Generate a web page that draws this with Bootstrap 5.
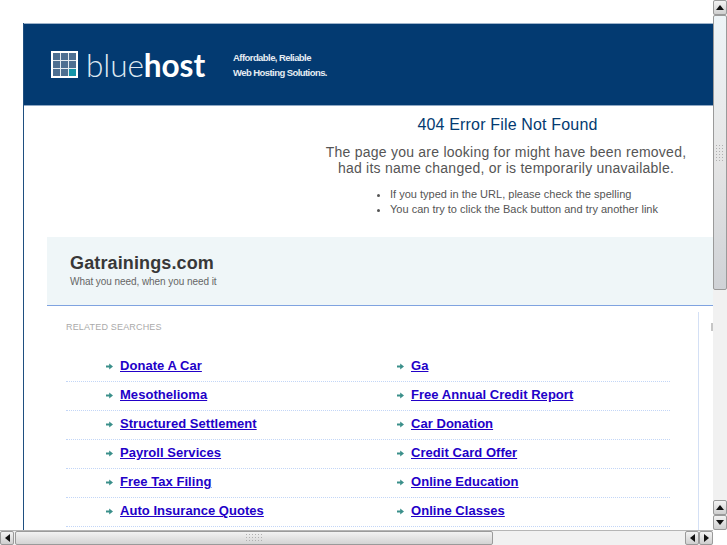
<!DOCTYPE html>
<html lang="en"><head><meta charset="utf-8"><title>404</title>
<link href="https://cdn.jsdelivr.net/npm/bootstrap@5.3.0/dist/css/bootstrap.min.css" rel="stylesheet">
<style>
html,body{height:545px;overflow:hidden;background:#fff;margin:0}
body{font-family:"Liberation Sans",Arial,sans-serif;color:#555}
.shell{width:727px;height:545px}
.viewport{height:530px;overflow:hidden}
.pagewrap{width:713px;padding:23px 0 0 23px}
.frame{border-left:1px solid #1f4f80;height:507px;overflow:hidden}
.brandbar{background:#033a71;height:83px;margin-left:-1px;padding:0 0 0 28px;border-top:1px solid #9fb4cb;border-bottom:1px solid #8fa8c4}
.logo-mark{width:27px;height:27px;margin-top:27px;flex:none}
.logo-word{font-family:Lato,sans-serif;font-size:31.6px;line-height:30px;color:#dfe9f1;font-weight:300;margin:26px 0 0 8px;letter-spacing:-.1px}
.logo-word b{font-weight:700;color:#fff}
.slogan{font-size:9.5px;line-height:14.5px;font-weight:700;color:#e6edf3;letter-spacing:-.57px;margin:27px 0 0 28px}
.errblock{padding:9px 13px 0 0;margin-left:288px;text-align:center;height:131px}
.errtitle{font-size:16px;line-height:20px;color:#033a71;font-weight:400;margin:0 0 9px;padding-left:3px;letter-spacing:.17px}
.errtext{font-size:14px;line-height:16px;color:#555;margin:0 0 11px;letter-spacing:.24px}
.errlist{font-size:11px;line-height:15px;color:#555;text-align:left;margin:0 0 0 67px;padding-left:11px;letter-spacing:.01px}
.sitehead{background:#eff6f8;height:69px;margin-left:23px;padding:16px 0 0 23px;border-bottom:1px solid #7fa3e0}
.sitename{font-size:18px;line-height:21px;font-weight:700;color:#383838;margin:0;letter-spacing:.13px}
.sitetag{font-size:10px;line-height:13px;color:#666;margin:1px 0 0;letter-spacing:-.06px}
.lower{margin-left:42px}
.results{width:604px;padding-top:15px;flex:none}
.restitle{font-size:9px;line-height:12px;color:#aaa;letter-spacing:.18px;text-transform:uppercase;margin:0 0 20px}
.linkrow{height:29px;border-bottom:1px dotted #c3d6f7}
.linkcell{font-size:13px;line-height:26px;padding-bottom:2px;font-weight:700;letter-spacing:.04px}
.linkcell a{color:#2200c8}
.cell-a{width:291px;padding-left:40px}
.cell-b{width:313px;padding-left:40px}
.arrow{width:7px;height:7px;margin:0 7px 0 0;flex:none}
.sidecol{margin:6px 0 0 28px;border-left:1px solid #d4e0f5;padding:11px 0 0 12px;width:15px;height:220px;overflow:hidden}
.stem{width:2px;height:8px;background:#c6c6c6}
.vbar{width:14px;height:530px;background:#f1f1f1;background-image:radial-gradient(#dcdcdc 35%,transparent 40%);background-size:2px 2px}
.hbar{height:15px;background:#f1f1f1;background-image:radial-gradient(#dcdcdc 35%,transparent 40%);background-size:2px 2px;border-top:1px solid #b5b5b5}
.sb-btn{background:linear-gradient(#f3f3f3,#cfcfcf);border:1px solid #9a9a9a;border-radius:2px;flex:none;display:flex;align-items:center;justify-content:center}
.v-btn{width:14px;height:15px}
.h-btn{width:14px;height:14px}
.thumb-v{height:275px;width:14px;background:linear-gradient(#eef4f7,#e6e6e6 50%,#cfd2d6);border:1px solid #9a9a9a;border-radius:2px;flex:none}
.thumb-h{width:478px;height:14px;background:linear-gradient(#f2f2f2,#d4d4d4);border:1px solid #9a9a9a;border-radius:2px;margin-left:1px;flex:none}
.grip{background-image:radial-gradient(#b0b0b0 40%,transparent 45%);background-size:3px 3px}
.grip-v{width:10px;height:17px;margin:128px auto 0}
.grip-h{width:18px;height:10px;margin:1px 0 0 229px}
.corner{width:14px;background:#fff;flex:none}
.spacer{flex:1}
</style></head><body>
<div class="shell d-flex flex-column">
 <div class="d-flex viewport">
  <div class="pagewrap"><div class="frame">
   <div class="brandbar d-flex">
    <svg class="logo-mark" viewBox="0 0 27 27"><rect width="27" height="27" fill="#fff"/><rect x="2" y="2" width="23" height="23" fill="#4d6f92"/><rect x="17.5" y="17.5" width="7.5" height="7.5" fill="#1494a8"/><path d="M9.5 2v23M17.5 2v23M2 9.5h23M2 17.5h23" stroke="#e4ebf1" stroke-width="1"/></svg>
    <div class="logo-word">blue<b>host</b></div>
    <div class="slogan">Affordable, Reliable<br>Web Hosting Solutions.</div>
   </div>
   <div class="errblock">
    <h1 class="errtitle">404 Error File Not Found</h1>
    <p class="errtext">The page you are looking for might have been removed,<br>had its name changed, or is temporarily unavailable.</p>
    <ul class="errlist"><li>If you typed in the URL, please check the spelling</li><li>You can try to click the Back button and try another link</li></ul>
   </div>
   <div class="sitehead"><h2 class="sitename">Gatrainings.com</h2><p class="sitetag">What you need, when you need it</p></div>
   <div class="lower d-flex">
    <div class="results">
     <div class="restitle">Related Searches</div>
     <div class="d-flex linkrow"><div class="cell-a linkcell d-flex align-items-center"><svg class="arrow" viewBox="0 0 7 7"><path d="M0 2.6h3.2V.4L7 3.5 3.2 6.6V4.4H0z" fill="#3a8f8a"/></svg><a href="#">Donate A Car</a></div><div class="cell-b linkcell d-flex align-items-center"><svg class="arrow" viewBox="0 0 7 7"><path d="M0 2.6h3.2V.4L7 3.5 3.2 6.6V4.4H0z" fill="#3a8f8a"/></svg><a href="#">Ga</a></div></div>
     <div class="d-flex linkrow"><div class="cell-a linkcell d-flex align-items-center"><svg class="arrow" viewBox="0 0 7 7"><path d="M0 2.6h3.2V.4L7 3.5 3.2 6.6V4.4H0z" fill="#3a8f8a"/></svg><a href="#">Mesothelioma</a></div><div class="cell-b linkcell d-flex align-items-center"><svg class="arrow" viewBox="0 0 7 7"><path d="M0 2.6h3.2V.4L7 3.5 3.2 6.6V4.4H0z" fill="#3a8f8a"/></svg><a href="#">Free Annual Credit Report</a></div></div>
     <div class="d-flex linkrow"><div class="cell-a linkcell d-flex align-items-center"><svg class="arrow" viewBox="0 0 7 7"><path d="M0 2.6h3.2V.4L7 3.5 3.2 6.6V4.4H0z" fill="#3a8f8a"/></svg><a href="#">Structured Settlement</a></div><div class="cell-b linkcell d-flex align-items-center"><svg class="arrow" viewBox="0 0 7 7"><path d="M0 2.6h3.2V.4L7 3.5 3.2 6.6V4.4H0z" fill="#3a8f8a"/></svg><a href="#">Car Donation</a></div></div>
     <div class="d-flex linkrow"><div class="cell-a linkcell d-flex align-items-center"><svg class="arrow" viewBox="0 0 7 7"><path d="M0 2.6h3.2V.4L7 3.5 3.2 6.6V4.4H0z" fill="#3a8f8a"/></svg><a href="#">Payroll Services</a></div><div class="cell-b linkcell d-flex align-items-center"><svg class="arrow" viewBox="0 0 7 7"><path d="M0 2.6h3.2V.4L7 3.5 3.2 6.6V4.4H0z" fill="#3a8f8a"/></svg><a href="#">Credit Card Offer</a></div></div>
     <div class="d-flex linkrow"><div class="cell-a linkcell d-flex align-items-center"><svg class="arrow" viewBox="0 0 7 7"><path d="M0 2.6h3.2V.4L7 3.5 3.2 6.6V4.4H0z" fill="#3a8f8a"/></svg><a href="#">Free Tax Filing</a></div><div class="cell-b linkcell d-flex align-items-center"><svg class="arrow" viewBox="0 0 7 7"><path d="M0 2.6h3.2V.4L7 3.5 3.2 6.6V4.4H0z" fill="#3a8f8a"/></svg><a href="#">Online Education</a></div></div>
     <div class="d-flex linkrow"><div class="cell-a linkcell d-flex align-items-center"><svg class="arrow" viewBox="0 0 7 7"><path d="M0 2.6h3.2V.4L7 3.5 3.2 6.6V4.4H0z" fill="#3a8f8a"/></svg><a href="#">Auto Insurance Quotes</a></div><div class="cell-b linkcell d-flex align-items-center"><svg class="arrow" viewBox="0 0 7 7"><path d="M0 2.6h3.2V.4L7 3.5 3.2 6.6V4.4H0z" fill="#3a8f8a"/></svg><a href="#">Online Classes</a></div></div>
    </div>
    <div class="sidecol"><div class="stem"></div></div>
   </div>
  </div></div>
  <div class="vbar d-flex flex-column">
   <div class="sb-btn v-btn"><svg width="8" height="5" viewBox="0 0 8 5"><path d="M4 0l4 5H0z" fill="#111"/></svg></div>
   <div class="thumb-v"><div class="grip grip-v"></div></div>
   <div class="spacer"></div>
   <div class="sb-btn v-btn"><svg width="8" height="5" viewBox="0 0 8 5"><path d="M4 0l4 5H0z" fill="#111"/></svg></div>
   <div class="sb-btn v-btn"><svg width="8" height="5" viewBox="0 0 8 5"><path d="M0 0h8L4 5z" fill="#111"/></svg></div>
  </div>
 </div>
 <div class="d-flex">
  <div class="hbar d-flex flex-grow-1">
   <div class="sb-btn h-btn"><svg width="5" height="8" viewBox="0 0 5 8"><path d="M5 0v8L0 4z" fill="#111"/></svg></div>
   <div class="thumb-h"><div class="grip grip-h"></div></div>
   <div class="spacer"></div>
   <div class="sb-btn h-btn"><svg width="5" height="8" viewBox="0 0 5 8"><path d="M5 0v8L0 4z" fill="#111"/></svg></div>
   <div class="sb-btn h-btn"><svg width="5" height="8" viewBox="0 0 5 8"><path d="M0 0l5 4-5 4z" fill="#111"/></svg></div>
  </div>
  <div class="corner"></div>
 </div>
</div>
<script src="https://cdn.jsdelivr.net/npm/bootstrap@5.3.0/dist/js/bootstrap.bundle.min.js"></script>
</body></html>
